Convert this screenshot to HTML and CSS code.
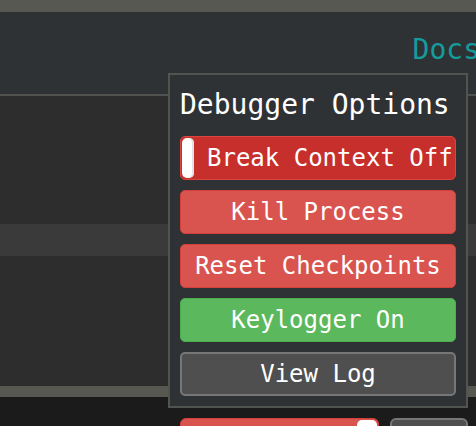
FILE: index.html
```html
<!DOCTYPE html>
<html>
<head>
<meta charset="utf-8">
<link rel="stylesheet" href="styles.css">
</head>
<body>
<div class="page">
  <div class="topbar"></div>
  <header class="header">
    <a class="docs">Docs</a>
  </header>
  <main class="main">
    <div class="row row-a"></div>
    <div class="row row-band"></div>
    <div class="row row-b"></div>
  </main>
  <div class="sepbar"></div>
  <footer class="footer">
    <div class="fbtn fbtn-red"><span class="fknob"></span></div>
    <div class="fbtn fbtn-gray"></div>
  </footer>
</div>
<div class="popup">
  <div class="popup-title">Debugger Options</div>
  <div class="btn btn-toggle"><span class="knob"></span><span class="toggle-label">Break Context Off</span></div>
  <div class="btn btn-danger">Kill Process</div>
  <div class="btn btn-danger">Reset Checkpoints</div>
  <div class="btn btn-success">Keylogger On</div>
  <div class="btn btn-default">View Log</div>
</div>
</body>
</html>
```
FILE: styles.css
```css
html, body {
  margin: 0;
  padding: 0;
  height: 100%;
  overflow: hidden;
  background: #1b1b1b;
  font-family: "DejaVu Sans Mono", "Liberation Mono", monospace;
}
.page {
  display: flex;
  flex-direction: column;
  height: 426px;
  overflow: hidden;
}
.page > * {
  flex-shrink: 0;
}
.topbar {
  height: 12px;
  background: #585853;
}
.header {
  height: 76px;
  padding-bottom: 6px;
  background: #2e3235;
  border-bottom: 2px solid #51524f;
  display: flex;
  justify-content: flex-end;
  align-items: center;
}
.docs {
  color: #149c9c;
  font-size: 28px;
  line-height: 34px;
  margin-right: -4px;
  white-space: nowrap;
}
.main {
  display: flex;
  flex-direction: column;
  height: 290px;
  background: #2d2d2d;
}
.row-a { height: 128px; flex-shrink: 0; }
.row-band { height: 32px; flex-shrink: 0; background: #3a3a3a; }
.row-b { flex: 1; }
.sepbar {
  height: 11px;
  background: #585853;
}
.footer {
  height: 40px;
  display: flex;
  gap: 11px;
  padding: 21px 0 0 180px;
  background: #1b1b1b;
}
.fbtn {
  height: 40px;
  border-radius: 6px;
  box-sizing: border-box;
}
.fbtn-red {
  width: 199px;
  background: #d9534f;
  border: 1px solid #d43f3a;
  display: flex;
  justify-content: flex-end;
  padding: 1px;
}
.fknob {
  width: 20px;
  height: 36px;
  background: #fff;
  border-radius: 5px;
}
.fbtn-gray {
  width: 78px;
  background: #4f4f4f;
  border: 2px solid #777;
}
.popup {
  position: absolute;
  left: 168px;
  top: 73px;
  width: 300px;
  box-sizing: border-box;
  background: #2e3235;
  border: 2px solid #52544f;
  padding: 10px;
  display: flex;
  flex-direction: column;
  gap: 10px;
}
.popup-title {
  color: #fff;
  font-size: 28px;
  line-height: 40px;
  height: 40px;
  margin-bottom: 1px;
  white-space: nowrap;
}
.btn {
  height: 44px;
  box-sizing: border-box;
  border-radius: 5px;
  color: #fff;
  font-size: 24px;
  display: flex;
  align-items: center;
  justify-content: center;
  white-space: nowrap;
}
.btn-toggle {
  background: #c62f2c;
  border: 1px solid #d9453f;
  justify-content: flex-start;
  padding: 1px;
}
.knob {
  width: 12px;
  height: 40px;
  background: #fff;
  border-radius: 5px;
  box-shadow: inset -2px 0 0 #e2e2e2;
  flex: none;
}
.toggle-label {
  margin-left: 13px;
}
.btn-danger {
  background: #d9534f;
  border: 1px solid #d43f3a;
}
.btn-success {
  background: #5cb85c;
  border: 1px solid #4cae4c;
}
.btn-default {
  background: #4f4f4f;
  border: 2px solid #777;
}
```
